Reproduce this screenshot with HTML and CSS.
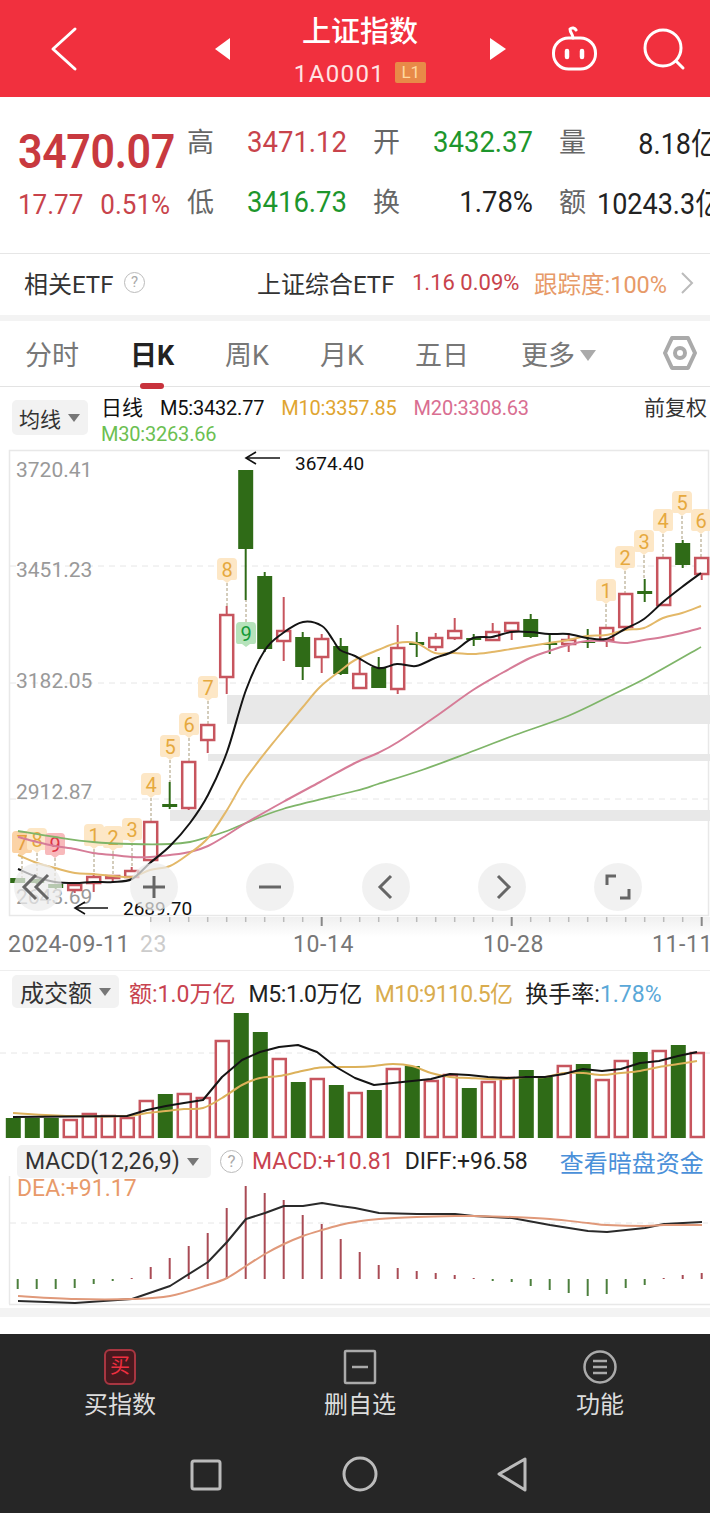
FILE: index.html
```html
<!DOCTYPE html>
<html lang="zh-CN">
  <head>
    <meta charset="UTF-8" />
    <meta name="viewport" content="width=device-width, initial-scale=1.0" />
    <title>上证指数</title>
    <link rel="stylesheet" href="styles.css">
  </head>
  <body>
    <header class="topbar">
      <svg class="back" width="32" height="46" viewBox="0 0 32 46"><polyline points="27,3 5,23 27,43" /></svg>
      <svg class="tri" width="20" height="24" viewBox="0 0 20 24"><polygon points="17,1 17,23 2,12" /></svg>
      <div class="title-block">
        <div class="title">上证指数</div>
        <div class="code">1A0001<span class="level">L1</span></div>
      </div>
      <svg class="tri" width="20" height="24" viewBox="0 0 20 24"><polygon points="3,1 3,23 19,12" /></svg>
      <svg class="robot" width="50" height="46" viewBox="0 0 50 46">
        <path d="M23 12 C23 8 20 7 20 3 C22 1 25 2 26 4" />
        <rect x="3.5" y="12" width="42" height="31" rx="15" />
        <line class="eye" x1="17" y1="25" x2="17" y2="31" />
        <line class="eye" x1="32" y1="25" x2="32" y2="31" />
      </svg>
      <svg class="search" width="44" height="44" viewBox="0 0 44 44">
        <circle cx="20" cy="21" r="18" />
        <line x1="33" y1="34" x2="40" y2="41" />
      </svg>
    </header>

    <section class="quote">
      <div class="price">3470.07</div>
      <div class="label">高</div><div class="val red">3471.12</div>
      <div class="label">开</div><div class="val green">3432.37</div>
      <div class="label">量</div><div class="val-end">8.18亿</div>
      <div class="change"><span>17.77</span><span>0.51%</span></div>
      <div class="label">低</div><div class="val green">3416.73</div>
      <div class="label">换</div><div class="val dark">1.78%</div>
      <div class="label">额</div><div class="val-end">10243.3亿</div>
    </section>

    <section class="etf">
      <span class="etf-title">相关ETF</span>
      <span class="help">?</span>
      <span class="etf-name">上证综合ETF</span>
      <span class="etf-nums">1.16 0.09%</span>
      <span class="etf-track">跟踪度:100%</span>
      <svg class="chev" width="14" height="24" viewBox="0 0 14 24"><polyline points="2,2 12,12 2,22" /></svg>
    </section>
    <div class="band"></div>

    <nav class="tabs">
      <span class="tab tab-w80">分时</span>
      <span class="tab tab-active">日K</span>
      <span class="tab">周K</span>
      <span class="tab">月K</span>
      <span class="tab">五日</span>
      <span class="tab tab-more">更多<i class="caret caret-big"></i></span>
      <svg class="gear" width="34" height="36" viewBox="0 0 34 36">
        <polygon points="9,3 25,3 32,18 25,33 9,33 2,18" />
        <circle cx="17" cy="18" r="5" />
      </svg>
    </nav>

    <section class="ma-legend">
      <div class="chip chip-ma">均线<i class="caret"></i></div>
      <div class="ma-values">
        <span class="ma-item ma-daily">日线</span>
        <span class="ma-item">M5:3432.77</span>
        <span class="ma-item orange">M10:3357.85</span>
        <span class="ma-item pink">M20:3308.63</span>
        <span class="ma-item light-green">M30:3263.66</span>
      </div>
      <div class="adjust">前复权</div>
    </section>

    <section class="kline">
      <svg id="kline-chart" class="chart" width="710" height="523" viewBox="0 447 710 523"></svg>
      <div class="zoom-bar">
        <div class="round-btn"><svg width="48" height="48" viewBox="0 0 48 48"><polyline points="22,12 10,24 22,36" /><polyline points="34,12 22,24 34,36" /></svg></div>
        <div class="round-btn"><svg width="48" height="48" viewBox="0 0 48 48"><line x1="13" y1="24" x2="35" y2="24" /><line x1="24" y1="13" x2="24" y2="35" /></svg></div>
        <div class="round-btn"><svg width="48" height="48" viewBox="0 0 48 48"><line x1="13" y1="24" x2="35" y2="24" /></svg></div>
        <div class="round-btn"><svg width="48" height="48" viewBox="0 0 48 48"><polyline points="29,13 18,24 29,35" /></svg></div>
        <div class="round-btn"><svg width="48" height="48" viewBox="0 0 48 48"><polyline points="20,13 31,24 20,35" /></svg></div>
        <div class="round-btn"><svg width="48" height="48" viewBox="0 0 48 48"><polyline points="13,22 13,13 22,13" /><polyline points="35,26 35,35 26,35" /></svg></div>
      </div>
    </section>

    <section class="volume">
      <div class="sub-legend">
        <div class="chip chip-vol">成交额<i class="caret"></i></div>
        <span class="vol-item rose">额:1.0万亿</span>
        <span class="vol-item vol-tight">M5:1.0万亿</span>
        <span class="vol-item vol-tighter orange">M10:9110.5亿</span>
        <span class="vol-item">换手率:<span class="sky">1.78%</span></span>
      </div>
      <svg id="volume-chart" class="chart" width="710" height="131" viewBox="0 1010 710 131"></svg>
    </section>

    <section class="macd">
      <div class="sub-legend macd-legend">
        <div class="chip chip-macd">MACD(12,26,9)<i class="caret"></i></div>
        <span class="help help-macd">?</span>
        <span class="macd-item rose">MACD:+10.81</span>
        <span class="macd-item">DIFF:+96.58</span>
        <span class="macd-link">查看暗盘资金</span>
      </div>
      <svg id="macd-chart" class="chart" width="710" height="131" viewBox="0 1176 710 131"></svg>
    </section>
    <div class="band band-macd"></div>

    <footer class="bottom">
      <div class="actions">
        <div class="action">
          <span class="buy-icon">买</span>
          <span class="action-label">买指数</span>
        </div>
        <div class="action">
          <svg width="36" height="36" viewBox="0 0 36 36"><rect x="3" y="2" width="30" height="32" rx="1" /><line x1="10" y1="18" x2="26" y2="18" /></svg>
          <span class="action-label">删自选</span>
        </div>
        <div class="action">
          <svg width="36" height="36" viewBox="0 0 36 36"><circle cx="18" cy="18" r="15.5" /><line x1="11" y1="12" x2="25" y2="12" /><line x1="11" y1="18" x2="25" y2="18" /><line x1="11" y1="24" x2="25" y2="24" /></svg>
          <span class="action-label">功能</span>
        </div>
      </div>
      <div class="sysnav">
        <svg width="40" height="40" viewBox="0 0 40 40"><rect x="7" y="7" width="28" height="28" rx="2" /></svg>
        <svg width="40" height="40" viewBox="0 0 40 40"><circle cx="20" cy="20" r="16" /></svg>
        <svg width="40" height="40" viewBox="0 0 40 40"><polygon points="4,20 30,5 30,36" /></svg>
      </div>
    </footer>

    <script src="chart.js"></script>
  </body>
</html>
```

FILE: styles.css
```css
* {
  box-sizing: border-box;
}

html,
body {
  margin: 0;
  padding: 0;
  width: 710px;
  height: 1513px;
  overflow: hidden;
  background: #fff;
}

body {
  font-family: Roboto, "Noto Sans CJK SC", sans-serif;
  color: #333;
}

svg {
  display: block;
  flex: none;
}

/* top bar */
.topbar {
  display: flex;
  align-items: center;
  height: 97px;
  padding-left: 48px;
  background: #f1303e;
  color: #fff;
}

.topbar svg {
  fill: none;
  stroke: #fff;
  stroke-width: 3;
  stroke-linecap: round;
  stroke-linejoin: round;
}

.back {
  margin-right: 133px;
}

.topbar .tri {
  fill: #fff;
  stroke: none;
}

.title-block {
  width: 254px;
  align-self: flex-start;
  padding-top: 14px;
  text-align: center;
}

.title {
  font-size: 29px;
  line-height: 36px;
  font-weight: 500;
}

.code {
  margin-top: 9px;
  font-size: 24px;
  line-height: 30px;
  letter-spacing: 1.4px;
  color: #ffe3e3;
}

.level {
  display: inline-block;
  margin-left: 10px;
  width: 31px;
  height: 21px;
  border-radius: 2px;
  background: #e88a48;
  color: #ffd9a0;
  font-size: 17px;
  line-height: 21px;
  letter-spacing: 0;
  vertical-align: 4px;
}

.robot {
  margin-left: 43px;
}

.topbar .eye {
  stroke-width: 4.5;
}

.search {
  margin-left: 43px;
}

/* quote */
.quote {
  display: grid;
  grid-template-columns: 169px 60px 126px 60px 126px 38px 121px;
  grid-template-rows: 60px 60px;
  align-items: center;
  height: 156px;
  padding: 13px 0 0 18px;
  width: 730px;
}

.price {
  margin-top: 21px;
  font-size: 43px;
  font-weight: 600;
  letter-spacing: -0.4px;
  color: #c8393f;
  transform-origin: left center;
  transform: scaleY(1.12);
}

.change {
  display: flex;
  gap: 17px;
  margin-top: 8px;
  font-size: 26px;
  color: #c8434b;
  transform: scaleY(1.08);
}

.label {
  font-size: 27px;
  color: #666;
}

.val {
  width: 100px;
  margin-top: 3px;
  font-size: 27.5px;
  text-align: right;
  white-space: nowrap;
  transform: scaleY(1.1);
}

.val-end {
  margin-top: 3px;
  font-size: 27px;
  text-align: right;
  white-space: nowrap;
  color: #222;
  transform: scaleY(1.1);
}

.red {
  color: #c8434b;
}

.green {
  color: #1d962c;
}

.dark {
  color: #222;
}

/* etf row */
.etf {
  display: flex;
  align-items: center;
  height: 62px;
  padding: 0 0 4px 24px;
  border-top: 1px solid #e6e6e6;
  font-size: 24px;
}

.etf-title {
  width: 100px;
}

.help {
  width: 21px;
  height: 21px;
  border: 1.5px solid #bbb;
  border-radius: 50%;
  color: #aaa;
  font-size: 15px;
  line-height: 18px;
  text-align: center;
}

.etf-name {
  margin-left: 112px;
  width: 155px;
  white-space: nowrap;
}

.etf-nums {
  width: 122px;
  color: #c8434b;
  font-size: 22px;
}

.etf-track {
  width: 146px;
  color: #e79a68;
  font-size: 23.5px;
  white-space: nowrap;
}

.chev {
  fill: none;
  stroke: #bbb;
  stroke-width: 2;
}

.band {
  height: 6px;
  background: #f3f3f3;
}

/* tabs */
.tabs {
  display: flex;
  align-items: center;
  height: 66px;
  padding: 0 0 1px 25px;
  border-bottom: 1px solid #e3e3e3;
  font-size: 27px;
  color: #777;
}

.tab {
  position: relative;
  width: 95px;
}

.tab-w80 {
  width: 105px;
}

.tab-active {
  color: #222;
  font-weight: 700;
}

.tab-active::after {
  content: "";
  position: absolute;
  left: 10px;
  bottom: -16px;
  width: 24px;
  height: 6px;
  border-radius: 3px;
  background: #c8323c;
}

.tab-more {
  width: 142px;
  margin-left: 11px;
  white-space: nowrap;
}

.caret {
  display: inline-block;
  margin-left: 7px;
  border-style: solid;
  border-width: 8px 6px 0;
  border-color: #777 transparent transparent;
  vertical-align: middle;
}

.caret-big {
  margin-left: 5px;
  border-width: 11px 8px 0;
  border-top-color: #aaa;
  vertical-align: 4px;
}

.gear {
  fill: none;
  stroke: #aaa;
  stroke-width: 4;
  stroke-linejoin: round;
}

/* ma legend */
.ma-legend {
  display: flex;
  height: 60px;
  padding: 8px 3px 0 12px;
  font-size: 20px;
}

.chip {
  display: flex;
  align-items: center;
  height: 33px;
  border-radius: 5px;
  background: #f2f2f2;
  white-space: nowrap;
}

.chip-ma {
  width: 76px;
  height: 35px;
  margin-top: 5px;
  padding-left: 7px;
  font-size: 21px;
}

.ma-values {
  display: flex;
  flex-wrap: wrap;
  width: 520px;
  margin-left: 13px;
  line-height: 26px;
}

.ma-item {
  margin-right: 17px;
  color: #111;
  letter-spacing: -0.2px;
}

.ma-daily {
  font-size: 21px;
  letter-spacing: 0;
}

.adjust {
  margin-left: auto;
  font-size: 21px;
  line-height: 26px;
}

.orange {
  color: #dfa531;
}

.pink {
  color: #d96e91;
}

.light-green {
  color: #6cbf52;
}

/* candle chart */
.kline {
  position: relative;
}

.zoom-bar {
  position: absolute;
  left: 14px;
  top: 416px;
  display: flex;
  gap: 68px;
}

.round-btn {
  width: 48px;
  height: 48px;
  border-radius: 50%;
  background: rgba(236, 236, 236, 0.72);
}

.round-btn svg {
  fill: none;
  stroke: #666;
  stroke-width: 3;
}

.axis-price {
  font-size: 21px;
  fill: #999;
}

.axis-date {
  font-size: 23px;
  letter-spacing: 0.6px;
  fill: #777;
}

.axis-faded {
  fill: #ccc;
}

.note {
  font-size: 19px;
  fill: #111;
}

.badge-text {
  font-size: 20px;
  text-anchor: middle;
}

/* sub charts */
.volume {
  border-top: 1px solid #eee;
}

.sub-legend {
  display: flex;
  align-items: center;
  height: 39px;
  padding: 4px 0 2px 12px;
  white-space: nowrap;
}

.chip-vol {
  width: 107px;
  padding-left: 8px;
  font-size: 24px;
}

.vol-item {
  margin-left: 13px;
  font-size: 23px;
  color: #222;
}

.chip-vol + .vol-item {
  margin-left: 10px;
}

.vol-tight {
  letter-spacing: -0.4px;
}

.vol-tighter {
  letter-spacing: -0.7px;
}

.macd-item {
  margin-left: 9px;
  font-size: 23px;
  color: #222;
}

.macd-item + .macd-item {
  margin-left: 11px;
}

.rose {
  color: #c8434f;
}

.volume .orange {
  color: #d9ac4e;
}

.sky {
  color: #5aa8d8;
}

.macd {
  position: relative;
  margin-top: 4px;
}

.macd-legend {
  height: 31px;
  padding: 2px 0 0 17px;
}

.chip-macd {
  width: 194px;
  padding-left: 8px;
  font-size: 23px;
}

.help-macd {
  width: 23px;
  height: 23px;
  margin-left: 9px;
  font-size: 17px;
  line-height: 20px;
}

.macd-link {
  margin-left: 32px;
  font-size: 24px;
  color: #4a90d9;
}

.dea-label {
  font-size: 23px;
  fill: #e89a6a;
}

.band-macd {
  height: 9px;
  margin-top: 1px;
}

/* bottom */
.bottom {
  position: absolute;
  left: 0;
  top: 1334px;
  width: 710px;
  height: 179px;
  background: #262626;
  color: #ddd;
}

.actions {
  display: grid;
  grid-template-columns: repeat(3, 240px);
  height: 120px;
  padding-top: 15px;
}

.action {
  display: flex;
  flex-direction: column;
  align-items: center;
}

.action svg {
  fill: none;
  stroke: #aaa;
  stroke-width: 2.5;
}

.buy-icon {
  width: 32px;
  height: 36px;
  border: 2px solid #a83641;
  border-radius: 6px;
  background: #46191e;
  color: #ee2f40;
  font-size: 20px;
  line-height: 31px;
  text-align: center;
}

.action-label {
  margin-top: 3px;
  font-size: 24px;
  line-height: 34px;
}

.sysnav {
  display: flex;
  justify-content: center;
  gap: 115px;
  padding-left: 10px;
}

.sysnav svg {
  fill: none;
  stroke: #bbb;
  stroke-width: 3;
  stroke-linejoin: round;
}
```

FILE: chart.js
```js
const RED = "#c7555e";
const GREEN = "#2f6b17";
const BLACK = "#141414";
const ORANGE = "#e3b868";
const PINK = "#d67c97";
const LIME = "#7fb569";

// type, wick top, body top, body bottom, wick bottom
const candles = [
  ["g", 878, 878, 883, 883],
  ["g", 879, 879, 883, 884],
  ["g", 884, 884, 888, 889],
  ["r", 884, 885, 890, 893],
  ["r", 873, 877, 883, 892],
  ["r", 876, 876, 878, 883],
  ["r", 867, 871, 877, 878],
  ["r", 821, 822, 860, 862],
  ["g", 782, 804, 807, 809],
  ["r", 761, 762, 808, 810],
  ["r", 724, 725, 740, 753],
  ["r", 606, 615, 677, 694],
  ["g", 470, 470, 549, 600],
  ["g", 572, 576, 649, 652],
  ["r", 597, 631, 641, 661],
  ["g", 632, 637, 667, 680],
  ["r", 634, 639, 657, 673],
  ["g", 638, 646, 674, 675],
  ["r", 660, 674, 688, 689],
  ["g", 657, 667, 688, 688],
  ["r", 625, 648, 689, 694],
  ["g", 632, 642, 645, 657],
  ["r", 633, 638, 647, 651],
  ["r", 618, 631, 638, 640],
  ["g", 634, 638, 640, 646],
  ["r", 623, 632, 640, 641],
  ["r", 622, 623, 631, 640],
  ["g", 614, 619, 637, 638],
  ["g", 635, 643, 645, 654],
  ["r", 633, 640, 644, 652],
  ["g", 629, 642, 643, 648],
  ["r", 627, 628, 640, 647],
  ["r", 593, 594, 627, 628],
  ["g", 579, 591, 594, 602],
  ["r", 557, 558, 605, 606],
  ["g", 540, 543, 565, 568],
  ["r", 557, 558, 574, 580]
];

const ma5 = [[18,869],[37,877],[55,882],[75,883],[93,882],[113,882],[132,879],[150,863],[170,846],[190,823],[208,795],[227,752],[246,690],[265,650],[283,633],[303,622],[322,626],[333,640],[340,650],[355,656],[378,668],[397,664],[416,666],[435,658],[454,651],[473,638],[492,637],[511,632],[530,632],[549,634],[568,634],[587,638],[606,639],[625,629],[644,619],[663,602],[682,587],[701,573]];
const ma10 = [[18,855],[37,863],[55,868],[75,873],[93,874],[113,876],[132,877],[150,870],[170,866],[190,853],[208,838],[227,810],[246,778],[277,738],[302,708],[320,687],[340,671],[355,660],[378,650],[397,643],[416,643],[435,653],[454,653],[473,654],[492,652],[511,649],[530,646],[549,643],[568,640],[587,636],[606,635],[625,630],[644,628],[663,618],[682,613],[701,606]];
const ma20 = [[18,837],[37,842],[55,846],[75,849],[93,853],[113,855],[132,857],[150,857],[170,855],[190,852],[208,846],[227,835],[246,823],[283,802],[320,782],[355,763],[378,753],[398,742],[435,717],[473,690],[502,673],[530,658],[549,651],[568,645],[587,641],[606,641],[625,643],[644,640],[663,637],[682,633],[701,628]];
const ma30 = [[18,831],[55,837],[93,842],[132,844],[170,844],[190,842],[208,837],[227,831],[246,823],[283,809],[355,791],[378,784],[422,770],[468,753],[515,735],[568,716],[612,695],[648,677],[701,647]];

// x, y, label, tone, y where the dotted line ends
const badges = [
  [22, 843, "7", "hot", 880],
  [37, 840, "8", "warm", 880],
  [55, 845, "9", "red", 884],
  [94, 836, "1", "warm", 873],
  [113, 838, "2", "warm", 876],
  [132, 830, "3", "warm", 867],
  [151, 785, "4", "warm", 821],
  [170, 747, "5", "warm", 782],
  [189, 725, "6", "warm", 761],
  [208, 688, "7", "warm", 724],
  [227, 570, "8", "warm", 606],
  [246, 634, "9", "green", 600],
  [606, 591, "1", "warm", 627],
  [625, 558, "2", "warm", 593],
  [644, 542, "3", "warm", 579],
  [663, 521, "4", "warm", 557],
  [682, 503, "5", "warm", 540],
  [701, 521, "6", "warm", 557]
];

// top of each bar and whether it is a rising day
const volumes = [[1118,0],[1118,0],[1118,0],[1119,1],[1113,1],[1115,1],[1117,1],[1100,1],[1094,0],[1093,1],[1097,1],[1040,1],[1013,0],[1032,0],[1058,1],[1082,0],[1078,1],[1085,0],[1092,1],[1090,0],[1068,1],[1066,0],[1080,1],[1074,1],[1088,0],[1081,1],[1077,1],[1070,0],[1077,0],[1065,1],[1064,0],[1079,1],[1060,1],[1052,0],[1050,1],[1045,0],[1052,1]];
const volMa5 = [[13,1117],[127,1116],[147,1110],[166,1106],[184,1103],[203,1100],[222,1077],[242,1060],[260,1052],[279,1047],[298,1045],[317,1052],[336,1067],[355,1078],[374,1085],[393,1083],[412,1081],[431,1079],[450,1074],[469,1075],[488,1077],[507,1078],[526,1077],[545,1077],[564,1074],[583,1069],[602,1071],[621,1069],[640,1063],[659,1061],[678,1056],[697,1052]];
const volMa10 = [[13,1113],[70,1116],[127,1116],[147,1113],[166,1111],[184,1109],[203,1108],[222,1098],[242,1085],[260,1078],[279,1076],[298,1072],[317,1068],[336,1067],[355,1067],[374,1066],[393,1064],[412,1066],[431,1073],[450,1077],[469,1078],[488,1079],[507,1079],[526,1077],[545,1077],[564,1073],[583,1073],[602,1075],[621,1073],[640,1071],[659,1067],[678,1064],[697,1061]];

const macdBars = [1289,1289,1289,1288,1284,1281,1278,1267,1258,1246,1233,1208,1186,1193,1200,1215,1224,1239,1252,1265,1268,1271,1273,1275,1278,1281,1282,1286,1290,1293,1296,1294,1288,1285,1278,1275,1273];
const diff = [[18,1301],[75,1303],[132,1299],[170,1286],[208,1262],[227,1242],[246,1219],[265,1213],[284,1206],[303,1206],[322,1203],[340,1206],[355,1208],[379,1213],[417,1214],[455,1214],[474,1216],[512,1218],[550,1225],[588,1231],[607,1232],[626,1230],[645,1228],[664,1224],[683,1223],[702,1222]];
const dea = [[18,1296],[75,1299],[132,1299],[170,1296],[208,1285],[227,1278],[246,1266],[265,1254],[284,1244],[303,1236],[322,1230],[340,1225],[355,1222],[379,1219],[417,1217],[455,1216],[474,1216],[512,1217],[550,1219],[588,1223],[607,1225],[645,1226],[664,1225],[702,1225]];

function line(x1, y1, x2, y2, color, width, dash) {
  const d = dash ? ` stroke-dasharray="${dash}"` : "";
  return `<line x1="${x1}" y1="${y1}" x2="${x2}" y2="${y2}" stroke="${color}" stroke-width="${width}"${d}/>`;
}

function rect(x, y, w, h, fill, stroke) {
  const s = stroke ? ` stroke="${stroke}" stroke-width="2.5"` : "";
  return `<rect x="${x}" y="${y}" width="${w}" height="${h}" fill="${fill}"${s}/>`;
}

function curve(points, color, width) {
  const p = points.map((pt) => pt.join(",")).join(" ");
  return `<polyline points="${p}" fill="none" stroke="${color}" stroke-width="${width}" stroke-linejoin="round"/>`;
}

// catmull-rom through the points, so the averages don't look jagged
function smooth(points, color, width) {
  let d = `M${points[0][0]} ${points[0][1]}`;
  for (let i = 0; i < points.length - 1; i++) {
    const p0 = points[Math.max(i - 1, 0)];
    const p1 = points[i];
    const p2 = points[i + 1];
    const p3 = points[Math.min(i + 2, points.length - 1)];
    const c1x = p1[0] + (p2[0] - p0[0]) / 6;
    const c1y = p1[1] + (p2[1] - p0[1]) / 6;
    const c2x = p2[0] - (p3[0] - p1[0]) / 6;
    const c2y = p2[1] - (p3[1] - p1[1]) / 6;
    d += ` C${c1x} ${c1y} ${c2x} ${c2y} ${p2[0]} ${p2[1]}`;
  }
  return `<path d="${d}" fill="none" stroke="${color}" stroke-width="${width}"/>`;
}

function text(x, y, str, cls) {
  return `<text x="${x}" y="${y}" class="${cls}">${str}</text>`;
}

function arrow(x1, x2, y) {
  return line(x1, y, x2, y, "#111", 1.6) +
    `<polyline points="${x1 + 10},${y - 6} ${x1},${y} ${x1 + 10},${y + 6}" fill="none" stroke="#111" stroke-width="1.6"/>`;
}

function badge(b) {
  const tones = {
    warm: ["#fde7c6", "#e6a93e"],
    hot: ["#fbd3a6", "#e6a03e"],
    red: ["#f8b9bb", "#dd3344"],
    green: ["#b6e3bb", "#159a38"]
  };
  const [x, y, label, tone, end] = b;
  const [fill, color] = tones[tone];
  const top = y - 12;
  const bot = y + 10;
  const lineStart = tone === "green" ? top : bot + 3;
  return line(x, lineStart, x, end, "#a89a78", 1, "3 2") +
    `<path d="M${x - 6} ${top} h12 q4 0 4 4 v${bot - top - 6} q0 2 -2 2 h-4 l-4 3 l-4 -3 h-4 q-2 0 -2 -2 v-${bot - top - 6} q0 -4 4 -4 z" fill="${fill}"/>` +
    `<text x="${x}" y="${y + 7}" class="badge-text" fill="${color}">${label}</text>`;
}

function drawKline() {
  let s = "";
  // frame and grid
  s += `<rect x="9.5" y="450.5" width="699" height="465" fill="#fff" stroke="#e8e8e8" stroke-width="1.5"/>`;
  [566, 683, 799].forEach((y) => {
    s += line(10, y, 708, y, "#e6e6e6", 1, "6 5");
  });
  // gray support bands
  s += rect(227, 695, 483, 29, "#e8e8e8");
  s += rect(208, 754, 502, 7, "#e8e8e8");
  s += rect(170, 810, 540, 11, "#e8e8e8");

  s += text(16, 477, "3720.41", "axis-price");
  s += text(16, 577, "3451.23", "axis-price");
  s += text(16, 688, "3182.05", "axis-price");
  s += text(16, 799, "2912.87", "axis-price");
  s += text(16, 904, "2643.69", "axis-price");

  badges.forEach((b) => {
    s += badge(b);
  });

  candles.forEach((c, i) => {
    const x = 17.7 + 19 * i;
    const color = c[0] === "r" ? RED : GREEN;
    s += line(x, c[1], x, c[4], color, 2);
    if (c[0] === "r") {
      s += rect(x - 6.5, c[2], 13, c[3] - c[2], "#fff", RED);
    } else {
      s += rect(x - 7.5, c[2], 15, c[3] - c[2], GREEN);
    }
  });

  s += smooth(ma30, LIME, 1.8);
  s += smooth(ma20, PINK, 2);
  s += smooth(ma10, ORANGE, 2);
  s += smooth(ma5, BLACK, 2);

  s += arrow(246, 280, 458);
  s += text(295, 470, "3674.40", "note");
  s += arrow(75, 108, 908);
  s += text(123, 915, "2689.70", "note");

  // time axis
  s += `<defs><linearGradient id="axis-fade" x1="0" y1="0" x2="0" y2="1"><stop offset="0" stop-color="#f0f0f0"/><stop offset="1" stop-color="#fff"/></linearGradient></defs>`;
  s += `<rect x="150" y="917" width="560" height="20" fill="url(#axis-fade)"/>`;
  for (let i = 7; i < 37; i++) {
    const x = 17.7 + 19 * i;
    const major = i === 16 || i === 26 || i === 36;
    s += line(x, 917, x, major ? 926 : 922, major ? "#888" : "#bbb", major ? 2 : 1.5);
  }
  s += text(8, 952, "2024-09-11", "axis-date");
  s += text(140, 952, "23", "axis-date axis-faded");
  s += text(293, 952, "10-14", "axis-date");
  s += text(483, 952, "10-28", "axis-date");
  s += text(652, 952, "11-11", "axis-date");
  document.getElementById("kline-chart").innerHTML = s;
}

function drawVolume() {
  let s = line(0, 1053, 710, 1053, "#e6e6e6", 1, "6 5");
  volumes.forEach((v, i) => {
    const x = 13.3 + 19 * i;
    if (v[1]) {
      s += rect(x - 6.5, v[0] + 1, 13, 1136 - v[0], "#fff", RED);
    } else {
      s += rect(x - 7.5, v[0], 15, 1138 - v[0], GREEN);
    }
  });
  s += smooth(volMa10, "#dcb15a", 2);
  s += curve(volMa5, BLACK, 2);
  document.getElementById("volume-chart").innerHTML = s;
}

function drawMacd() {
  let s = line(9.5, 1176, 9.5, 1304, "#e8e8e8", 1.5);
  s += line(9, 1304.5, 710, 1304.5, "#e8e8e8", 1.5);
  s += line(10, 1223, 708, 1223, "#e6e6e6", 1, "6 5");
  s += text(17, 1196, "DEA:+91.17", "dea-label");
  macdBars.forEach((top, i) => {
    const x = 17.7 + 19 * i;
    const up = top < 1279;
    s += line(x, top, x, 1279, up ? "#a94b55" : "#4c7f3d", 2);
  });
  s += curve(diff, "#2a2a2a", 2);
  s += smooth(dea, "#e0997a", 2);
  document.getElementById("macd-chart").innerHTML = s;
}

drawKline();
drawVolume();
drawMacd();
```
